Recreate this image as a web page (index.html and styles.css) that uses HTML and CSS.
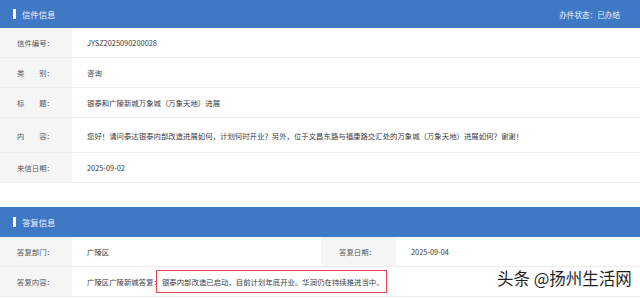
FILE: index.html
```html
<!DOCTYPE html>
<html lang="zh-CN">

<head>
  <meta charset="UTF-8" />
  <meta name="viewport" content="width=device-width, initial-scale=1.0" />
  <title>信件详情</title>
  <link rel="stylesheet" href="styles.css">
</head>

<body>
  <div class="panel">
    <div class="bar">
      <span class="bar-title">信件信息</span>
      <span class="bar-status">办件状态：已办结</span>
    </div>
    <div class="row">
      <div class="label">信件编号：</div>
      <div class="value">JYSZ2025090200028</div>
    </div>
    <div class="row">
      <div class="label">类　　别：</div>
      <div class="value">咨询</div>
    </div>
    <div class="row">
      <div class="label">标　　题：</div>
      <div class="value">银泰和广陵新城万象城（万象天地）进展</div>
    </div>
    <div class="row tall">
      <div class="label">内　　容：</div>
      <div class="value">您好！请问泰达银泰内部改造进展如何，计划何时开业？另外，位于文昌东路与福康路交汇处的万象城（万象天地）进展如何？谢谢！</div>
    </div>
    <div class="row">
      <div class="label">来信日期：</div>
      <div class="value">2025-09-02</div>
    </div>
  </div>

  <div class="panel reply">
    <div class="bar">
      <span class="bar-title">答复信息</span>
    </div>
    <div class="row">
      <div class="label">答复部门：</div>
      <div class="value half">广陵区</div>
      <div class="label wide">答复日期：</div>
      <div class="value">2025-09-04</div>
    </div>
    <div class="row">
      <div class="label">答复内容：</div>
      <div class="value">广陵区广陵新城答复：<span class="mark">银泰内部改造已启动，目前计划年底开业。华润仍在持续推进当中。</span></div>
    </div>
  </div>

  <div class="watermark">头条 @扬州生活网</div>
</body>

</html>
```

FILE: styles.css
```css
body {
  margin: 0;
  background-color: #fff;
  font-family: "Noto Sans CJK SC", "Liberation Sans", sans-serif;
  font-size: 7.4px;
  color: #444;
  overflow: hidden;
}

.panel .bar {
  display: flex;
  align-items: center;
  justify-content: space-between;
  height: 28px;
  padding: 0 20px 0 13px;
  background-color: #3f78c5;
  color: #eef3fb;
}

.bar-title {
  display: flex;
  align-items: center;
  font-size: 8.4px;
}

.bar-title::before {
  content: "";
  width: 3px;
  height: 10px;
  margin-right: 6px;
  background-color: #fff;
}

.bar-status {
  font-size: 7.6px;
}

.row {
  display: flex;
  height: 29px;
  border-bottom: 1px solid #ededed;
}

.row.tall {
  height: 34px;
}

.row .label {
  display: flex;
  align-items: center;
  flex: 0 0 55px;
  padding-left: 17px;
  background-color: #f5f5f5;
  color: #555;
}

.row .label.wide {
  flex: 0 0 57px;
  padding-left: 18px;
}

.row .value {
  display: flex;
  align-items: center;
  flex: 1;
  padding-left: 15px;
  color: #3a3a3a;
  white-space: nowrap;
}

.row .value.half {
  flex: 0 0 234px;
}

.reply {
  margin-top: 24px;
}

.reply .bar {
  height: 30px;
}

.mark {
  margin-left: -5px;
  padding: 5px 2px 5px 5px;
  border: 1.5px solid #e5484d;
}

.watermark {
  position: absolute;
  left: 497px;
  top: 266px;
  font-size: 16.5px;
  color: #1f1f1f;
  text-shadow: 0 0 2px #fff, 0 0 2px #fff;
}
```
